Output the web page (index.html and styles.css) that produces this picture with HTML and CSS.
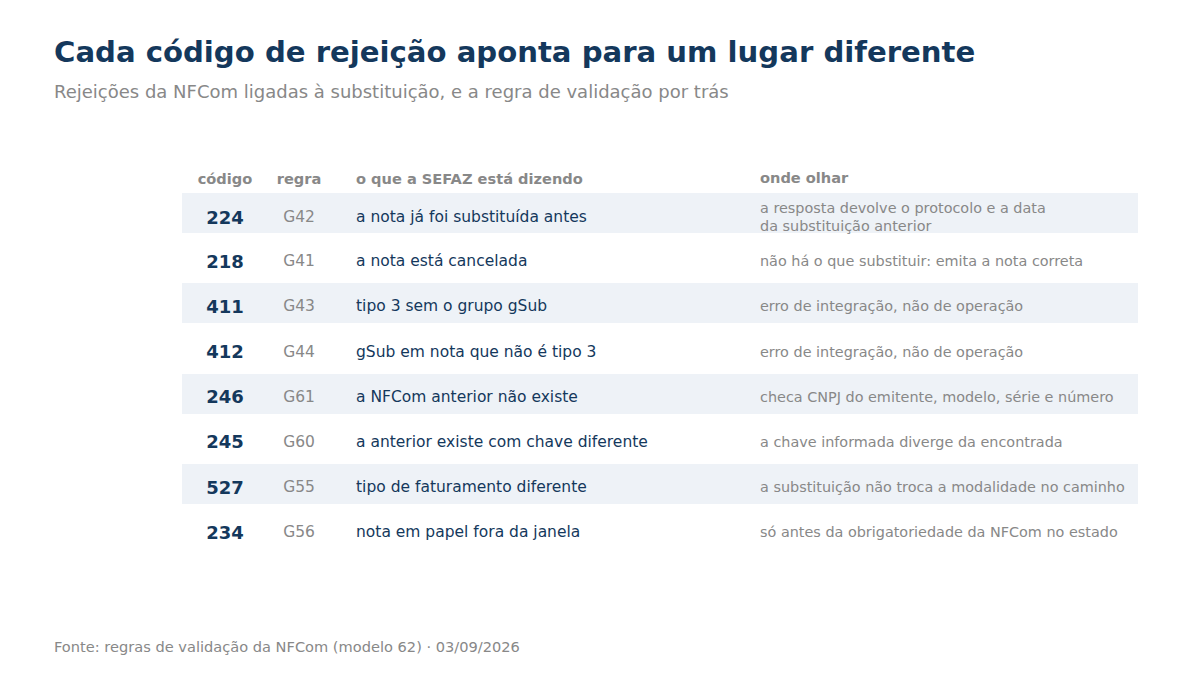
FILE: index.html
```html
<!DOCTYPE html>
<html lang="pt-BR">
<head>
<meta charset="utf-8">
<title>Rejeições NFCom</title>
<link rel="stylesheet" href="styles.css">
</head>
<body>
<div class="page">
  <h1 class="title">Cada código de rejeição aponta para um lugar diferente</h1>
  <p class="subtitle">Rejeições da NFCom ligadas à substituição, e a regra de validação por trás</p>

  <div class="table">
    <div class="row head">
      <div class="c-code">código</div>
      <div class="c-rule">regra</div>
      <div class="c-desc">o que a SEFAZ está dizendo</div>
      <div class="c-where">onde olhar</div>
    </div>
    <div class="row band">
      <div class="c-code">224</div>
      <div class="c-rule">G42</div>
      <div class="c-desc">a nota já foi substituída antes</div>
      <div class="c-where">a resposta devolve o protocolo e a data<br>da substituição anterior</div>
    </div>
    <div class="row">
      <div class="c-code">218</div>
      <div class="c-rule">G41</div>
      <div class="c-desc">a nota está cancelada</div>
      <div class="c-where">não há o que substituir: emita a nota correta</div>
    </div>
    <div class="row band">
      <div class="c-code">411</div>
      <div class="c-rule">G43</div>
      <div class="c-desc">tipo 3 sem o grupo gSub</div>
      <div class="c-where">erro de integração, não de operação</div>
    </div>
    <div class="row">
      <div class="c-code">412</div>
      <div class="c-rule">G44</div>
      <div class="c-desc">gSub em nota que não é tipo 3</div>
      <div class="c-where">erro de integração, não de operação</div>
    </div>
    <div class="row band">
      <div class="c-code">246</div>
      <div class="c-rule">G61</div>
      <div class="c-desc">a NFCom anterior não existe</div>
      <div class="c-where">checa CNPJ do emitente, modelo, série e número</div>
    </div>
    <div class="row">
      <div class="c-code">245</div>
      <div class="c-rule">G60</div>
      <div class="c-desc">a anterior existe com chave diferente</div>
      <div class="c-where">a chave informada diverge da encontrada</div>
    </div>
    <div class="row band">
      <div class="c-code">527</div>
      <div class="c-rule">G55</div>
      <div class="c-desc">tipo de faturamento diferente</div>
      <div class="c-where">a substituição não troca a modalidade no caminho</div>
    </div>
    <div class="row">
      <div class="c-code">234</div>
      <div class="c-rule">G56</div>
      <div class="c-desc">nota em papel fora da janela</div>
      <div class="c-where">só antes da obrigatoriedade da NFCom no estado</div>
    </div>
  </div>

  <p class="footer">Fonte: regras de validação da NFCom (modelo 62) · 03/09/2026</p>
</div>
</body>
</html>
```
FILE: styles.css
```css
html, body {
  margin: 0;
  padding: 0;
  background: #ffffff;
}

body {
  font-family: "DejaVu Sans", "Noto Sans", sans-serif;
  color: #14385c;
}

.page {
  box-sizing: border-box;
  height: 675px;
  padding: 0 54px 18px 54px;
  display: flex;
  flex-direction: column;
}

.title {
  margin: 35px 0 0 0;
  font-size: 29.15px;
  line-height: 34px;
  font-weight: bold;
  color: #14385c;
}

.subtitle {
  margin: 13px 0 0 0;
  font-size: 18px;
  line-height: 20px;
  color: #888888;
}

.table {
  margin: 61px 0 0 128px;
  width: 956px;
  display: flex;
  flex-direction: column;
  gap: 5.2px;
}

.row {
  display: grid;
  grid-template-columns: 86px 62px 430px 1fr;
  align-items: center;
  height: 40px;
  box-sizing: border-box;
  padding-top: 6px;
}

.row.band {
  background: #eef2f7;
}

.row.head {
  height: 30px;
  padding-top: 0;
  margin-bottom: -5.2px;
}

.c-code {
  text-align: center;
  font-size: 18px;
  font-weight: bold;
  color: #14385c;
}

.c-rule {
  text-align: center;
  font-size: 15.5px;
  color: #888888;
}

.c-desc {
  padding-left: 26px;
  font-size: 15.5px;
  color: #14385c;
}

.c-where {
  font-size: 14.4px;
  line-height: 18px;
  color: #888888;
  white-space: nowrap;
}

.head .c-code,
.head .c-rule,
.head .c-desc,
.head .c-where {
  font-size: 14.6px;
  font-weight: bold;
  color: #888888;
}

.footer {
  margin: auto 0 0 0;
  font-size: 14.6px;
  line-height: 20px;
  color: #888888;
}
```
